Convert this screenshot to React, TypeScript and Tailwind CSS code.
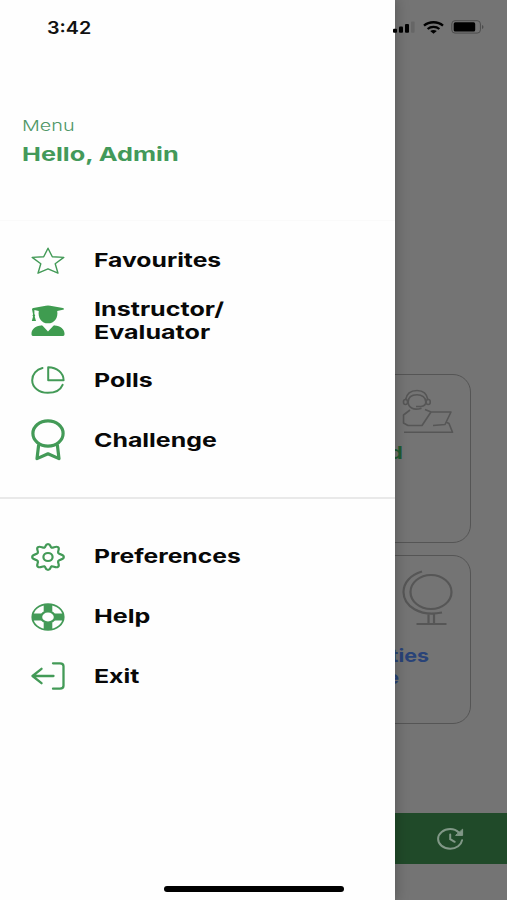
import type { ReactNode } from 'react';

type MenuItem = {
  id: string;
  label: ReactNode;
  stretch: string;
  icon: ReactNode;
};

const StarIcon = () => (
  <svg className="w-[34px] h-[28px]" viewBox="0 0 34 28" fill="none" stroke="#439a57" strokeWidth="1.4" strokeLinejoin="round">
    <path d="M17 1.2 21.3 9.8 32.8 10.4 24.2 16.8 27 26.2 17 21.8 7 26.2 9.8 16.8 1.2 10.4 12.7 9.8Z" />
  </svg>
);

const InstructorIcon = () => (
  <svg className="w-[34px] h-[32px]" viewBox="0 0 34 32" fill="#3f9c50">
    <path d="M1 4.2C1 3.4 1.6 3.1 2.4 2.9L14.8.8Q17 .4 19.2.8L31.9 2.9C33.4 3.2 33.4 4.5 31.9 4.8L26.2 5.9C27.4 12.8 23.4 18.3 17 18.3S6.6 12.8 7.8 5.9L3.4 5.1V9.3C4.4 9.9 4.3 11 3.7 11.4L5 16H.8L2.1 11.4C1.4 10.9 1.4 9.9 2.1 9.4Z" />
    <path d="M10.3 20.4Q11 20.2 11.6 20.8L17 26.5 22.4 20.8Q23 20.2 23.7 20.4C29.4 20.8 33.5 24 33.5 28.6V29.4Q33.5 31 31.5 31H2.5Q.5 31 .5 29.4V28.6C.5 24 4.6 20.8 10.3 20.4Z" />
  </svg>
);

const PollsIcon = () => (
  <svg className="w-[34px] h-[28px]" viewBox="0 0 34 28" fill="none" stroke="#439a57" strokeWidth="2" strokeLinecap="round" strokeLinejoin="round">
    <path d="M11.5 2C5.5 3.5 1.2 8.3 1.2 14.2 1.2 21.3 8 26.8 16.8 26.8 23.7 26.8 29.5 24 31.6 18.8" />
    <path d="M17.2 1.3V14.3H32.6C32.6 7 25.8 1.3 17.2 1.3Z" />
  </svg>
);

const ChallengeIcon = () => (
  <svg className="w-[34px] h-[42px]" viewBox="0 0 34 42" fill="none" stroke="#439a57" strokeWidth="3.2" strokeLinejoin="round">
    <ellipse cx="17" cy="14.5" rx="15.1" ry="12.6" />
    <path d="M7.7 25.5 6 39.6 17 34.8 28 39.6 26.3 25.5" />
  </svg>
);

const GearIcon = () => (
  <svg className="w-[34px] h-[28px]" viewBox="0 0 34 28" fill="none" stroke="#439a57" strokeWidth="2.2" strokeLinejoin="round">
    <path d="M13.6 4.6C15 3.9 14 1.1 17 1.1S19 3.9 20.4 4.6C22.2 5.3 24.8 2.6 27 4.2 29.3 5.9 26.3 8 27.2 9.9 28.2 11.7 32.8 11.2 32.8 14S28.2 16.3 27.2 18.1C26.3 20 29.3 22.1 27 23.8 24.8 25.4 22.2 22.7 20.4 23.4 19 24.1 20 26.9 17 26.9S15 24.1 13.6 23.4C11.8 22.7 9.2 25.4 7 23.8 4.7 22.1 7.7 20 6.8 18.1 5.8 16.3 1.2 16.8 1.2 14S5.8 11.7 6.8 9.9C7.7 8 4.7 5.9 7 4.2 9.2 2.6 11.8 5.3 13.6 4.6Z" />
    <ellipse cx="17" cy="14" rx="4.6" ry="4" />
  </svg>
);

const HelpIcon = () => (
  <svg className="w-[34px] h-[28px]" viewBox="0 0 34 28" fill="none" stroke="#439a57">
    <ellipse cx="17" cy="14" rx="15.7" ry="12.9" strokeWidth="1.8" />
    <path d="M17 1V8.6M17 19.4V27" strokeWidth="8.6" />
    <path d="M1.3 14H10.8M23.2 14H32.7" strokeWidth="7" />
    <ellipse cx="17" cy="14" rx="6.9" ry="5.6" strokeWidth="2.2" />
  </svg>
);

const ExitIcon = () => (
  <svg className="w-[34px] h-[28px]" viewBox="0 0 34 28" fill="none" stroke="#439a57" strokeWidth="2.3" strokeLinecap="round" strokeLinejoin="round">
    <path d="M22 1.3H29Q32.5 1.3 32.5 4.2V23.8Q32.5 26.7 29 26.7H22" />
    <path d="M22.5 14H1.5M10.5 6.8 1.5 14 10.5 21.2" />
  </svg>
);

const ClassIcon = () => (
  <svg className="w-[52px] h-[46px]" viewBox="0 0 52 46" fill="none" stroke="#565656" strokeWidth="1.6" strokeLinejoin="round">
    <path d="M3.5 11C4.5 4.8 9 1.5 15 1.5S25 4.8 26 11" />
    <path d="M19.5 19.2C11 22 6.2 18 6.2 13S10 5.7 15 5.7 23.8 8.6 23.8 13Q23.8 17 19 17.5H14" />
    <rect x="1.5" y="10.5" width="4" height="5" rx="2" />
    <rect x="24.2" y="10.5" width="4" height="5" rx="2" />
    <path d="M8 21 1.5 26V34L6 36.5H20L29 23 23 20.5M28 23H49L43 35.5 31 36.5M44 33 47 34.5 50.5 43.3H2" />
  </svg>
);

const GlobeIcon = () => (
  <svg className="w-[52px] h-[56px]" viewBox="0 0 52 56" fill="none" stroke="#565656" strokeWidth="2.2">
    <ellipse cx="29" cy="22" rx="20.5" ry="17" />
    <path d="M20 1.5C8 5 1.5 13 1.5 22 1.5 36 18 47 40 42.5M26.5 44.5V53.5M32 44.5V53.5M14.5 54H44.5" />
  </svg>
);

const SignalIcon = () => (
  <svg className="w-[22px] h-[12px]" viewBox="0 0 22 12">
    <rect x="0" y="7.8" width="4" height="4" rx="1" />
    <rect x="6" y="5.4" width="4" height="6.4" rx="1" />
    <rect x="12" y="3" width="4" height="8.8" rx="1" />
    <rect x="18" y="0.4" width="3.6" height="11.4" rx="1" fill="#666" />
  </svg>
);

const WifiIcon = () => (
  <svg className="w-[21px] h-[13px]" viewBox="0 0 21 13" fill="none" stroke="#000" strokeWidth="2.3">
    <path d="M1 4.7C6.2.1 14.8.1 20 4.7M4.6 8C8 5.1 13 5.1 16.4 8" />
    <path d="M7.2 10.1Q10.5 7.8 13.8 10.1L10.5 12.7Z" fill="#000" stroke="none" />
  </svg>
);

const BatteryIcon = () => (
  <svg className="w-[33px] h-[14px]" viewBox="0 0 33 14">
    <rect x="0.8" y="0.7" width="28.6" height="12.4" rx="3.2" fill="none" stroke="#4c4c4c" />
    <rect x="2.7" y="2.3" width="21.5" height="9.2" rx="1.6" />
    <path d="M31 5V9Q32.5 8.5 32.5 7T31 5Z" fill="#4c4c4c" />
  </svg>
);

const RecentIcon = () => (
  <svg className="w-[27px] h-[22px]" viewBox="0 0 27 22" fill="none" stroke="#819887" strokeWidth="2" strokeLinecap="round">
    <path d="M22 4.8C19.8 2.5 16.8 1.1 13.2 1.1 6.5 1.1 1.1 5.4 1.1 10.9S6.5 20.7 13.2 20.7C19.3 20.7 24.3 17 25.1 12.2" />
    <path d="M13.2 6.4V11.2L17.7 13.8" />
    <path d="M25.6 1.6V7.4H19Z" fill="#819887" strokeWidth="1" />
  </svg>
);

const mainItems: MenuItem[] = [
  { id: 'favourites', label: 'Favourites', stretch: 'scale-x-[1.3]', icon: <StarIcon /> },
  { id: 'instructor', label: <>Instructor/<br />Evaluator</>, stretch: 'scale-x-[1.32]', icon: <InstructorIcon /> },
  { id: 'polls', label: 'Polls', stretch: 'scale-x-[1.31]', icon: <PollsIcon /> },
  { id: 'challenge', label: 'Challenge', stretch: 'scale-x-[1.31]', icon: <ChallengeIcon /> },
];

const settingsItems: MenuItem[] = [
  { id: 'preferences', label: 'Preferences', stretch: 'scale-x-[1.3]', icon: <GearIcon /> },
  { id: 'help', label: 'Help', stretch: 'scale-x-[1.32]', icon: <HelpIcon /> },
  { id: 'exit', label: 'Exit', stretch: 'scale-x-[1.31]', icon: <ExitIcon /> },
];

const MenuRow = ({ item }: { item: MenuItem }) => (
  <li className="flex items-center h-[59.8px] pl-[31.4px]">
    <span className="w-[34px] flex-shrink-0 flex justify-center">{item.icon}</span>
    <span className={`ml-[28.6px] origin-left whitespace-nowrap text-[19px] leading-[23px] font-bold text-[#080808] ${item.stretch}`}>
      {item.label}
    </span>
  </li>
);

const App = () => {
  return (
    <div className="relative w-[507px] h-[900px] overflow-hidden bg-[#747474] font-['Inter',sans-serif]">
      {/* Dimmed home screen */}
      <div className="flex flex-col h-full pt-[374px]">
        <div className="flex flex-col items-end gap-3 pr-9">
          <div className="w-[210px] h-[169px] rounded-[18px] border-[1.5px] border-[#555] pt-[14px] pr-[16px] flex flex-col items-end">
            <ClassIcon />
            <span className="mt-[8px] mr-[51px] origin-right scale-x-[1.22] text-[18px] leading-[20px] font-bold text-[#1f5b31]">Board</span>
          </div>
          <div className="w-[210px] h-[169px] rounded-[18px] border-[1.5px] border-[#555] pt-[14px] pr-[16px] flex flex-col items-end">
            <GlobeIcon />
            <span className="mt-[19px] mr-[25px] origin-right scale-x-[1.19] text-[18px] leading-[22px] font-bold text-[#294378]">Activities</span>
            <span className="mr-[55px] origin-right scale-x-[1.2] text-[18px] leading-[22px] font-bold text-[#294378]">Face</span>
          </div>
        </div>
        <div className="mt-[89px] h-[51px] bg-[#204a29] flex items-center justify-end pr-[43px]">
          <RecentIcon />
        </div>
      </div>

      {/* Drawer */}
      <aside className="absolute inset-y-0 left-0 w-[395px] bg-[#fefefe] shadow-[0_0_12px_1px_rgba(0,0,0,0.25)] flex flex-col">
        <header className="h-[221px] pt-[116px] pl-[22px] border-b border-[#fafafa]">
          <p className="w-fit origin-left scale-x-[1.32] text-[15px] leading-[20px] font-light text-[#4f9766]">Menu</p>
          <h1 className="mt-[7px] w-fit origin-left scale-x-[1.33] text-[19px] leading-[23px] font-bold text-[#43995a]">Hello, Admin</h1>
        </header>
        <ul className="h-[278px] pt-[10px] border-b-2 border-[#e9e9e9]">
          {mainItems.map((item) => (
            <MenuRow key={item.id} item={item} />
          ))}
        </ul>
        <ul className="pt-[28px]">
          {settingsItems.map((item) => (
            <MenuRow key={item.id} item={item} />
          ))}
        </ul>
      </aside>

      {/* Status bar */}
      <div className="absolute inset-x-0 top-0 h-[54px] flex items-center justify-between pl-[46.5px] pr-[23px]">
        <span className="mt-px origin-left scale-x-[1.16] text-[17px] leading-[20px] font-semibold text-[#111]">3:42</span>
        <div className="flex items-center">
          <SignalIcon />
          <span className="ml-[8px]"><WifiIcon /></span>
          <span className="ml-[7px]"><BatteryIcon /></span>
        </div>
      </div>

      {/* Home indicator */}
      <div className="absolute left-[164px] bottom-[8px] w-[180px] h-[6px] rounded-full bg-black" />
    </div>
  );
};

export default App;
